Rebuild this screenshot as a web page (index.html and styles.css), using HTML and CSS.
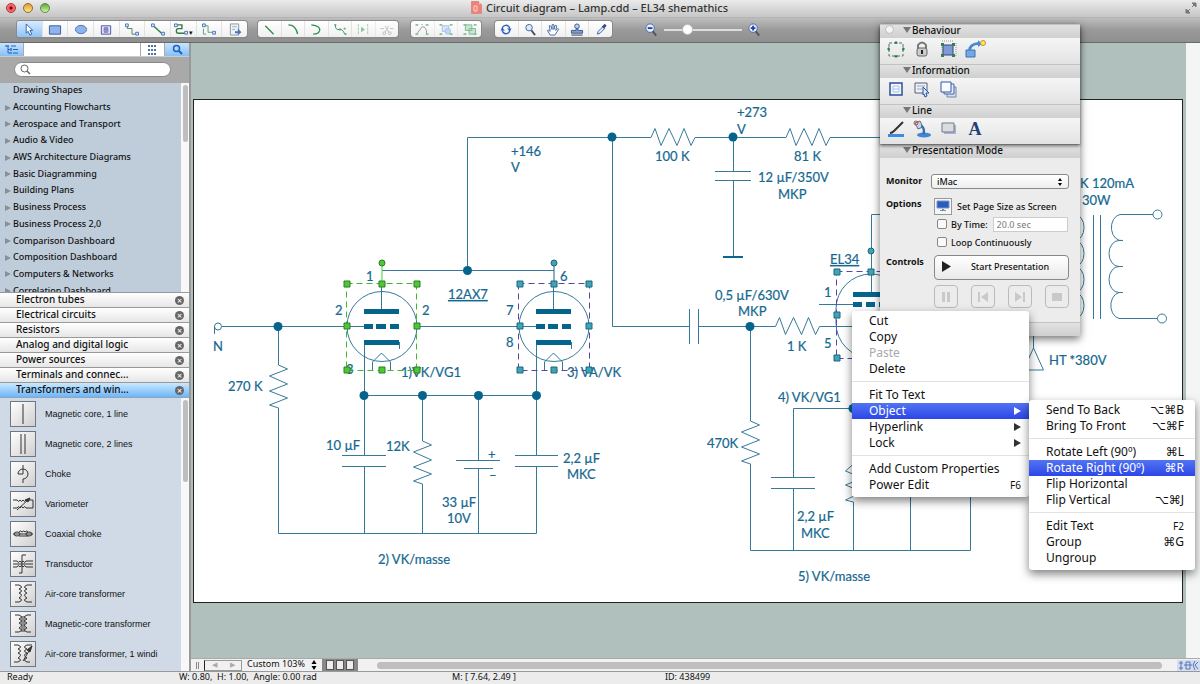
FILE: index.html
```html
<!DOCTYPE html>
<html lang="en">
<head>
    <meta charset="UTF-8">
    <meta name="viewport" content="width=device-width, initial-scale=1.0">
    <title>Circuit diagram – Lamp.cdd – EL34 shemathics</title>
    <link rel="stylesheet" href="styles.css">
</head>
<body>
    <header class="titlebar">
        <div class="lights">
            <button class="light red" aria-label="Close"></button>
            <button class="light yellow" aria-label="Minimize"></button>
            <button class="light green" aria-label="Zoom"></button>
        </div>
        <h1 class="title">
            <svg width="11" height="13" viewBox="0 0 11 13"><path d="M.5.5h7l3 3v9H.5z" fill="#ee8278" stroke="#d98b84"/><path d="M7.500.5v3h3" fill="#fbd5d0" stroke="#d98b84"/><path d="M3 5h3v5H3z" fill="none" stroke="#fbd5d0"/></svg>
            Circuit diagram – Lamp.cdd – EL34 shemathics
        </h1>
        <svg class="fullscreen" width="12" height="12" viewBox="0 0 12 12"><path d="M7 1h4v4zM1 7v4h4zM7 5l3-3M5 7l-3 3" fill="#777" stroke="#777"/></svg>
    </header>

    <div class="toolbar">
        <div class="group draw-tools">
            <button class="on" aria-label="Select"><svg viewBox="0 0 16 14"><path d="M5 1l7 7H9l2 4-2 1-2-4-2 2z" fill="#fff" stroke="#2c5fa8"/></svg></button>
            <button aria-label="Rectangle"><svg viewBox="0 0 16 14"><path d="M2 3h12v9H2z" fill="#8db4ec" stroke="#3a5a9c"/></svg></button>
            <button aria-label="Ellipse"><svg viewBox="0 0 16 14"><ellipse cx="8" cy="7" rx="6" ry="4.500" fill="#8db4ec" stroke="#4a74bd"/></svg></button>
            <button aria-label="Text"><svg viewBox="0 0 16 14"><path d="M3 3h10v9H3z" fill="#e3e4fb" stroke="#4c4f9c"/><path d="M6 5h4v5H6zM6 7h4" fill="#9697dd" stroke="#7879c4"/></svg></button>
            <button aria-label="Connector"><svg viewBox="0 0 16 14"><path d="M3 3v3h5v6h5" fill="none" stroke="#3a8a50"/><path d="M1 1h3v3H1zM12 10h3v3h-3z" fill="#dce9ff" stroke="#4772bd"/></svg></button>
            <button aria-label="Direct connector"><svg viewBox="0 0 16 14"><path d="M3 3l10 9" stroke="#2f7d46" stroke-width="1.500"/><path d="M1 1h3v3H1zM12 10h3v3h-3z" fill="#dce9ff" stroke="#4772bd"/></svg></button>
            <button aria-label="Smart connector"><svg viewBox="0 0 16 14"><path d="M3 2h6v4H5q-2 0-2 2.500T5 11h8" fill="none" stroke="#2f7d46" stroke-width="1.500"/><path d="M1 1h3v3H1zM12 9h3v3h-3z" fill="#dce9ff" stroke="#4772bd"/></svg><span class="drop">▾</span></button>
            <button aria-label="Chain"><svg viewBox="0 0 16 14"><path d="M3 3h4v7h6M2 6v6h3" fill="none" stroke="#55a172"/><path d="M1 1h3v3H1zM12 9h3v3h-3z" fill="#dce9ff" stroke="#4772bd"/></svg></button>
            <button aria-label="Insert"><svg viewBox="0 0 16 14"><path d="M3 1h9v12H3z" fill="#eef1f5" stroke="#8a94a0"/><path d="M5 4h5M5 7h3" stroke="#93b7a5"/><path d="M8 9h3V6l4 4-4 3v-2H8z" fill="#4b75b8"/></svg></button>
        </div>
        <div class="group line-tools">
            <button aria-label="Line"><svg viewBox="0 0 16 14"><path d="M4 3l9 9" stroke="#2f9050" stroke-width="1.500"/></svg></button>
            <button aria-label="Arc"><svg viewBox="0 0 16 14"><path d="M3 2q8 0 10 10" fill="none" stroke="#2f9050" stroke-width="1.500"/></svg></button>
            <button aria-label="Curve"><svg viewBox="0 0 16 14"><path d="M3 2q10 1 9 6-1 4-7 4" fill="none" stroke="#2f9050" stroke-width="1.500"/></svg></button>
            <button aria-label="Spline"><svg viewBox="0 0 16 14"><path d="M3 2q0 6 4 5t6 5" fill="none" stroke="#2f9050"/><path d="M2 1h2v2H2zM7 6h2v2H7zM13 11h2v2h-2zM12 5h2v2h-2z" fill="#64a77b"/></svg></button>
            <button class="dim" aria-label="Mirror"><svg viewBox="0 0 16 14"><path d="M3 1v12M13 1v12" stroke="#66b27f" stroke-dasharray="3 1"/><path d="M6 4v6l4-3z" fill="#3f9a5d"/></svg></button>
            <button class="dim" aria-label="Trim"><svg viewBox="0 0 16 14"><path d="M1 6h4M11 6h4M6 3l4 7M10 3l-4 7" stroke="#999"/><circle cx="5" cy="11" r="1.500" fill="none" stroke="#999"/><circle cx="11" cy="11" r="1.500" fill="none" stroke="#999"/></svg></button>
        </div>
        <div class="group edit-tools">
            <button class="dim" aria-label="Edit points"><svg viewBox="0 0 16 14"><path d="M3 11l5-7q5 0 5 7" fill="none" stroke="#555"/><path d="M1 1h3v2H1zM12 1h3v2h-3zM1 11h3v2H1zM12 11h3v2h-3zM7 1h2v1H7z" fill="#31a45a"/></svg></button>
            <button class="dim" aria-label="Union"><svg viewBox="0 0 16 14"><path d="M4 3h7v6H4z" fill="#c2dcff" stroke="#6c9bd6"/><circle cx="10" cy="9" r="3" fill="#9ec4fa" stroke="#6c9bd6"/><path d="M1 1h3v2H1zM12 1h3v2h-3zM1 11h3v2H1zM12 11h3v2h-3z" fill="#31a45a"/></svg></button>
            <button class="dim" aria-label="Group"><svg viewBox="0 0 16 14"><path d="M3 2h7v6H3zM7 6h7v6H7z" fill="#a8ddbb" stroke="#31904f"/><path d="M1 1h3v2H1zM12 1h3v2h-3zM1 11h3v2H1zM12 11h3v2h-3z" fill="#31a45a"/></svg></button>
        </div>
        <div class="group view-tools">
            <button aria-label="Refresh"><svg viewBox="0 0 16 14"><path d="M4 7a4 4 0 0 1 8-1M12 7a4 4 0 0 1-8 1" fill="none" stroke="#2c62bb" stroke-width="1.500"/><path d="M9 6h5l-2 3zM2 8h5L4 5z" fill="#2c62bb"/></svg></button>
            <button aria-label="Magnifier"><svg viewBox="0 0 16 14"><circle cx="7" cy="5" r="3.500" fill="#dce9ff" stroke="#44659c"/><path d="M9.500 8l4 5" stroke="#45516b" stroke-width="2"/></svg></button>
            <button aria-label="Pan"><svg viewBox="0 0 16 14"><path d="M5 13L2 8q1-1 3 1L4 3q1-1 2 1l1 3V2q1-1 2 0v5l1-4q1-1 2 0l-1 5 2-2q1 0 1 1l-4 6z" fill="#fff" stroke="#3b63ab"/></svg></button>
            <button aria-label="Stamp"><svg viewBox="0 0 16 14"><circle cx="8" cy="3.500" r="2.500" fill="#bcd1f6" stroke="#39558b"/><path d="M7 6h2v2h5v3H2V8h5z" fill="#7f9fd8" stroke="#39558b"/><path d="M2 13h12" stroke="#333"/></svg></button>
            <button aria-label="Eyedropper"><svg viewBox="0 0 16 14"><path d="M4 12l1-3 5-5 2 2-5 5z" fill="#dce9ff" stroke="#3f6299"/><path d="M10 5l3-3" stroke="#2b4b87" stroke-width="3"/></svg></button>
        </div>
        <div class="zoom">
            <button aria-label="Zoom out"><svg viewBox="0 0 16 16"><path d="M9 9l4 5" stroke="#555" stroke-width="2"/><circle cx="6.500" cy="6" r="4.500" fill="#e9f1ff" stroke="#4967af"/><path d="M4 6h5" stroke="#2342a0" stroke-width="2"/></svg></button>
            <input type="range" min="0" max="100" value="27" aria-label="Zoom level">
            <button aria-label="Zoom in"><svg viewBox="0 0 16 16"><path d="M9 9l4 5" stroke="#555" stroke-width="2"/><circle cx="6.500" cy="6" r="4.500" fill="#e9f1ff" stroke="#4967af"/><path d="M4 6h5M6.500 3.500v5" stroke="#2342a0" stroke-width="2"/></svg></button>
        </div>
    </div>

    <main class="workspace">
        <aside class="sidebar">
            <div class="tabs">
                <button class="tab on" aria-label="Tree"><svg width="14" height="11" viewBox="0 0 14 11"><path d="M0 2h3M6 2h5M3 2v7h3M3 5.500h3M8 5.500h5M8 9h5" fill="none" stroke="#2563b5"/><path d="M5 4h2v3H5zM5 8h2v2H5zM1 1h3v2H1z" fill="#4d87cf"/></svg></button>
                <span class="tab-gap"></span>
                <button class="tab grid" aria-label="Grid"><svg width="9" height="10" viewBox="0 0 9 10"><path d="M0 0h2v2H0zM3 0h2v2H3zM6 0h2v2H6zM0 4h2v2H0zM3 4h2v2H3zM6 4h2v2H6zM0 8h2v2H0zM3 8h2v2H3zM6 8h2v2H6z" fill="#4a70a8"/></svg></button>
                <button class="tab on search-tab" aria-label="Search"><svg width="11" height="11" viewBox="0 0 11 11"><circle cx="4.500" cy="4.500" r="3" fill="none" stroke="#1e60b5" stroke-width="1.500"/><path d="M7 7l3 3" stroke="#1e60b5" stroke-width="2"/></svg></button>
            </div>
            <label class="search">
                <svg width="11" height="11" viewBox="0 0 11 11"><circle cx="4.500" cy="4.500" r="3.500" fill="none" stroke="#666"/><path d="M7 7l3 3" stroke="#666" stroke-width="1.500"/></svg>
                <input type="search" aria-label="Search libraries">
            </label>
            <div class="tree">
                <ul>
                    <li class="leaf">Drawing Shapes</li>
                    <li>Accounting Flowcharts</li>
                    <li>Aerospace and Transport</li>
                    <li>Audio &amp; Video</li>
                    <li>AWS Architecture Diagrams</li>
                    <li>Basic Diagramming</li>
                    <li>Building Plans</li>
                    <li>Business Process</li>
                    <li>Business Process 2,0</li>
                    <li>Comparison Dashboard</li>
                    <li>Composition Dashboard</li>
                    <li>Computers &amp; Networks</li>
                    <li>Correlation Dashboard</li>
                </ul>
                <div class="vtrack"><div class="vthumb"></div></div>
            </div>
            <ul class="libs">
                <li>Electron tubes <button aria-label="Close library">×</button></li>
                <li>Electrical circuits <button aria-label="Close library">×</button></li>
                <li>Resistors <button aria-label="Close library">×</button></li>
                <li>Analog and digital logic <button aria-label="Close library">×</button></li>
                <li>Power sources <button aria-label="Close library">×</button></li>
                <li>Terminals and connec... <button aria-label="Close library">×</button></li>
                <li class="active">Transformers and win... <button aria-label="Close library">×</button></li>
            </ul>
            <div class="shapes">
                <ul>
                    <li><svg viewBox="0 0 24 24"><path d="M12 2v20"/></svg>Magnetic core, 1 line</li>
                    <li><svg viewBox="0 0 24 24"><path d="M10 2v20M14 2v20"/></svg>Magnetic core, 2 lines</li>
                    <li><svg viewBox="0 0 24 24"><path d="M12 3v9H7a5 5 0 1 1 5 5v4"/></svg>Choke</li>
                    <li><svg viewBox="0 0 24 24"><path d="M2 8h4q2 3 3 0 2 3 3 0 2 3 3 0h7v8M2 16h4q2-3 3 0 2-3 3 0 2-3 3 0h7M6 18L19 6"/><path d="M19 6l-5 2 3 2z" fill="#333"/></svg>Variometer</li>
                    <li><svg viewBox="0 0 24 24"><path d="M2 12h20M8 10q2-2 3 0 2-2 3 0 2-2 3 0M8 14h9"/><ellipse cx="6" cy="12" rx="3" ry="2"/><ellipse cx="18" cy="12" rx="3" ry="2"/></svg>Coaxial choke</li>
                    <li><svg viewBox="0 0 24 24"><path d="M2 9h4q1 3 3 0 1 3 3 0 2 3 3 0h7M2 15h4q1-3 3 0 1-3 3 0 2-3 3 0h7M15 3h-4v18H8M2 12h20"/></svg>Transductor</li>
                    <li><svg viewBox="0 0 24 24"><path d="M4 3h4q5 2 0 4 5 2 0 4 5 2 0 5 5 2 0 4H4M21 3h-5q-5 2 0 4-5 2 0 4-5 2 0 5-5 2 0 4h5"/></svg>Air-core transformer</li>
                    <li><svg viewBox="0 0 24 24"><path d="M4 3h4q5 2 0 4 5 2 0 4 5 2 0 5 5 2 0 4H4M20 3h-4q-5 2 0 4-5 2 0 4-5 2 0 5-5 2 0 4h4M11 4v16M13 4v16"/></svg>Magnetic-core transformer</li>
                    <li><svg viewBox="0 0 24 24"><path d="M3 3h4q5 2 0 4 5 2 0 4 5 2 0 5 5 2 0 4H3M21 3h-5q-5 2 0 4-5 2 0 4-5 2 0 5-5 2 0 4h3M12 19l9-15"/><path d="M21 4l-5 4 3 2z" fill="#333"/></svg>Air-core transformer, 1 windi</li>
                </ul>
                <div class="vtrack"><div class="vthumb long"></div></div>
            </div>
        </aside>

        <section class="editor">
            <div class="stage">
                <svg class="diagram" width="995" height="615" viewBox="191 43 995 615">
                    <rect class="paper" x="193.500" y="99.500" width="989" height="503"/>

                    <!-- wires -->
                    <g class="wire">
                        <circle cx="218" cy="326.500" r="3.500"/>
                        <path d="M214.500 326v8M222 326.500h142M417 326.500h119"/>
                        <path d="M278.500 326v39l9 4-18 7 18 8-18 7 18 7-18 7 9 3v125.500h258v-67M536.500 455.500V345M364.500 345v110.500"/>
                        <path d="M382 270.500h172M467.500 270V137.500H651l4-9 6 17 8-17 8 17 7-17 7 17 4-8h91l4-9 6 17 8-17 8 17 7-17 7 17 4-8h60"/>
                        <path d="M733.500 137v34.500M715 171.500h36M715 180.500h36M733.500 180.500V257"/>
                        <path d="M612.500 137v189.500h77M689.500 309v35M698.500 309v35M698.500 326.500h77l4-9 6 17 8-17 8 17 7-17 7 17 4-8h40"/>
                        <path d="M342 455.500h44M342 466.500h44M364.500 466.500v67M364 395.500h173"/>
                        <path d="M422.500 395v46l9 4-18 7 18 8-18 7 18 7-18 7 9 3v49.500"/>
                        <path d="M478.500 395v65.500M456 460.500h44M464 468.500h29M478.500 468.500v65"/>
                        <path d="M515 455.500h43M515 466.500h43"/>
                        <path d="M750.500 326v95l9 4-18 7 18 8-18 7 18 7-18 7 9 3v86.500h220V490"/>
                        <path d="M852 408.500h-58.500v69M771 477.500h44M771 488.500h44M793.500 488.500v62M910.500 490v60"/>
                        <path d="M853.500 408v56l-8 7 17 7-17 7 17 7-17 8 8 2v48"/>
                        <path d="M871.500 292v-77.500h20M819 304.500h34"/>
                        <path d="M906 309a35 35 0 0 0-70 0v14a35 35 0 0 0 70 0z"/>
                        <path d="M1093.500 215v104M1100.500 215v104M1153 214.500h-33a10 13 0 0 0 3 26h-4a10 13 0 0 0 0 26h4-4a10 13 0 0 0 0 26h4-4a10 13 0 0 0 4 26h34"/>
                        <path d="M1075 214.500a9 13 0 0 1 0 26 9 13 0 0 1 0 26 9 13 0 0 1 0 26 9 13 0 0 1 0 26"/>
                        <circle cx="1157.500" cy="214.500" r="4.500"/>
                        <circle cx="1162" cy="318.500" r="4.500"/>
                        <path d="M1033.500 330v18l-10 22h20l-10-22"/>
                    </g>
                    <rect x="723" y="256" width="20" height="2" fill="#0b678f"/>

                    <!-- tubes -->
                    <g id="tube">
                        <g class="wire">
                            <circle cx="382" cy="326.500" r="35"/>
                            <path d="M381.500 283v28M346 326.500h20M399.500 342v7M372.500 370v-8l9-9 9 9v8"/>
                        </g>
                        <path class="solid" d="M364 309h35v5h-35zM364 324h9v5h-9zM376 324h10v5h-10zM390 324h9v5h-9zM364 340h35v5h-35z"/>
                    </g>
                    <use href="#tube" x="172"/>
                    <path class="solid" d="M853 292h30v5h-30zM853 302h9v5h-9zM866 302h9v5h-9zM879 302h9v5h-9z"/>

                    <!-- junctions -->
                    <g class="solid">
                        <circle cx="278" cy="326.500" r="4.500"/><circle cx="467.500" cy="270.500" r="4.500"/>
                        <circle cx="612" cy="137" r="4.500"/><circle cx="733" cy="137" r="4.500"/>
                        <circle cx="364" cy="395.500" r="4.500"/><circle cx="422.500" cy="395.500" r="4.500"/>
                        <circle cx="478.500" cy="395.500" r="4.500"/><circle cx="536.500" cy="395.500" r="4.500"/>
                        <circle cx="750" cy="326.500" r="4.500"/><circle cx="853" cy="408.500" r="4.500"/>
                    </g>

                    <!-- labels -->
                    <g class="label">
                        <text x="511" y="156">+146</text><text x="511" y="172">V</text>
                        <text x="737" y="117">+273</text><text x="737" y="134">V</text>
                        <text x="655" y="161">100 K</text><text x="794" y="161">81 K</text>
                        <text x="758" y="182">12 µF/350V</text><text x="778" y="199">MKP</text>
                        <text x="715" y="300">0,5 µF/630V</text><text x="738" y="316">MKP</text>
                        <text x="448" y="299" class="ref">12AX7</text><text x="830" y="264" class="ref">EL34</text>
                        <text x="213" y="351">N</text><text x="228" y="391">270 K</text>
                        <text x="366" y="281">1</text><text x="335" y="315">2</text><text x="422" y="315">2</text><text x="346" y="374">3</text>
                        <text x="560" y="281">6</text><text x="506" y="315">7</text><text x="506" y="347">8</text>
                        <text x="401" y="377">1)VK/VG1</text><text x="567" y="377">3) VA/VK</text>
                        <text x="326" y="450">10 µF</text><text x="386" y="451">12K</text>
                        <text x="488" y="459">+</text><text x="489" y="480">–</text>
                        <text x="442" y="507">33 µF</text><text x="447" y="523">10V</text>
                        <text x="563" y="463">2,2 µF</text><text x="567" y="479">MKC</text>
                        <text x="378" y="564">2) VK/masse</text><text x="798" y="581">5) VK/masse</text>
                        <text x="787" y="351">1 K</text><text x="824" y="297">1</text><text x="824" y="348">5</text>
                        <text x="778" y="402">4) VK/VG1</text><text x="707" y="448">470K</text>
                        <text x="797" y="521">2,2 µF</text><text x="801" y="538">MKC</text>
                        <text x="1080" y="188">K 120mA</text><text x="1082" y="205">30W</text>
                        <text x="1049" y="365">HT *380V</text>
                    </g>

                    <!-- selection frames -->
                    <g class="sel first">
                        <path class="frame" d="M346.500 283.500h70v87h-70z"/><path class="stem" d="M382 263v20"/>
                        <circle cx="382" cy="263" r="3"/>
                        <path d="M344 281h6v6h-6zM379 281h6v6h-6zM414 281h6v6h-6zM344 323h6v6h-6zM414 323h6v6h-6zM344 367h6v6h-6zM379 367h6v6h-6zM414 367h6v6h-6z"/>
                    </g>
                    <g class="sel">
                        <path class="frame" d="M518.500 283.500h71v87h-71z"/><path class="stem" d="M554 263v20"/>
                        <circle cx="554" cy="263" r="3"/>
                        <path d="M517 281h6v6h-6zM551 281h6v6h-6zM586 281h6v6h-6zM517 323h6v6h-6zM586 323h6v6h-6zM517 367h6v6h-6zM551 367h6v6h-6zM586 367h6v6h-6z"/>
                    </g>
                    <g class="sel">
                        <path class="frame" d="M836.500 271.500h70v87h-70z"/>
                        <circle cx="871" cy="251" r="3"/>
                        <path d="M834 269h6v6h-6zM868 269h6v6h-6zM834 312h6v6h-6zM834 355h6v6h-6z"/>
                    </g>
                </svg>
                <div class="stage-scroll"></div>
            </div>
            <div class="pagebar">
                <span class="grip"></span>
                <div class="nav"><button aria-label="Previous page">◀</button><button aria-label="Next page">▶</button></div>
                <select aria-label="Zoom"><option>Custom 103%</option></select>
                <svg class="updown" width="6" height="10" viewBox="0 0 6 10"><path d="M3 0l2.500 4h-5zM3 10L.5 6h5z"/></svg>
                <div class="layouts"><i></i><i></i><i></i></div>
                <div class="htrack"><div class="hthumb"></div></div>
                <svg class="corner" width="23" height="11" viewBox="0 0 23 11"><path d="M0 0h23v11H0z" fill="#d3ddf0"/><path d="M2 3h4M2 8h4M4 1v9M9 2h4v7H9zM7 5h8M18 1l-2 4 2 5M21 2l-3 3 3 4" fill="none" stroke="#5775b8"/></svg>
            </div>
        </section>
    </main>

    <footer class="status">
        <span class="s-ready">Ready</span>
        <span class="s-size">W: 0.80,&nbsp; H: 1.00,&nbsp; Angle: 0.00 rad</span>
        <span class="s-mouse">M: [ 7.64, 2.49 ]</span>
        <span>ID: 438499</span>
    </footer>

    <div class="palette">
        <div class="palette-tools">
            <span class="dot"></span>
            <h2>Behaviour</h2>
            <div class="icons">
                <button aria-label="Resize"><svg viewBox="0 0 18 18"><path d="M2 3h14v13H2z" fill="none" stroke="#46785b" stroke-dasharray="3 2"/><path d="M7 3l2-2 2 2-2 1zM7 16l2 2 2-2-2-1zM2 7L0 9l2 2 1-2zM16 7l2 2-2 2-1-2z" fill="#23804a"/></svg></button>
                <button aria-label="Lock"><svg viewBox="0 0 18 18"><path d="M5 9V5q4-5 8 0v4" fill="none" stroke="#777" stroke-width="2"/><rect x="4" y="8" width="10" height="8" rx="2" fill="#ccc" stroke="#666"/><path d="M9 10v4" stroke="#222" stroke-width="2"/></svg></button>
                <button aria-label="Connection"><svg viewBox="0 0 18 18"><path d="M3 1h12M3 3v13M17 3v13" stroke="#999" stroke-dasharray="1 1"/><path d="M4 5h10v10H4z" fill="#7f9bd6" stroke="#334779"/><path d="M2 3h3v3H2zM13 3h3v3h-3zM2 14h3v3H2zM13 14h3v3h-3z" fill="#2f8052"/></svg></button>
                <button aria-label="Hyperlink"><svg viewBox="0 0 22 18"><path d="M1 10h9v7H1z" fill="#78a6e0" stroke="#3971b8"/><path d="M3 10Q4 3 13 2v-2l4 4-4 3V5Q7 5 6 10z" fill="#4789d5"/><circle cx="18" cy="3" r="2.500" fill="#ffe46c" stroke="#c09a1a"/></svg></button>
            </div>
            <h2>Information</h2>
            <div class="icons">
                <button aria-label="Note"><svg viewBox="0 0 18 18"><path d="M3 3h12v12H3z" fill="#f2f7ff" stroke="#2d4f97" stroke-width="1.500"/><path d="M6 6h6v6H6zM6 9h6" fill="none" stroke="#b3c4e6"/></svg></button>
                <button aria-label="Custom properties"><svg viewBox="0 0 18 18"><path d="M2 3h12v10H2z" fill="#eef1f7" stroke="#555f72"/><path d="M4 6h8M4 9h5" stroke="#9aa8c0"/><path d="M10 7l6 6h-3l1 3-2 1-1-3-1 1z" fill="#d8e7ff" stroke="#2851a0"/></svg></button>
                <button aria-label="Layers"><svg viewBox="0 0 18 18"><path d="M8 7h9v10H8z" fill="#d3def5" stroke="#7584a8"/><path d="M5 4h10v10H5z" fill="#e3ebfb" stroke="#4a65a3"/><path d="M2 2h10v10H2z" fill="#f7faff" stroke="#3359a8"/></svg></button>
            </div>
            <h2>Line</h2>
            <div class="icons">
                <button aria-label="Line colour"><svg viewBox="0 0 18 18"><path d="M1 15.500h16" stroke="#3c8be0" stroke-width="3"/><path d="M7 11l9-9M7 11q-2 2-4 2" fill="none" stroke="#333" stroke-width="2"/></svg></button>
                <button aria-label="Fill"><svg viewBox="0 0 18 18"><ellipse cx="11" cy="15" rx="7" ry="2.500" fill="#3e86d2"/><path d="M2 3l5-2 3 6-5 2z" fill="#cbd3e2" stroke="#5f6b85"/><path d="M8 5q5 1 4 9h-3q2-4-1-7z" fill="#346eb7"/><circle cx="3" cy="3" r="2" fill="none" stroke="#a35353"/></svg></button>
                <button aria-label="Shadow"><svg viewBox="0 0 18 18"><path d="M5 5h12v9H5z" fill="#a8b4d0"/><path d="M3 3h12v9H3z" fill="#d9dce0" stroke="#767b88"/></svg></button>
                <button class="font-btn" aria-label="Font">A</button>
            </div>
        </div>
        <h2 class="wide">Presentation Mode</h2>
        <form class="present">
            <label class="name" for="monitor">Monitor</label>
            <div class="field"><div class="pick"><select id="monitor"><option>iMac</option></select><svg class="updown" width="6" height="8" viewBox="0 0 6 8"><path d="M3 0l2 3H1zM3 8L1 5h4z"/></svg></div></div>
            <span class="name options-name">Options</span>
            <div class="field options">
                <div class="opt"><button type="button" class="screen" aria-label="Set Page Size as Screen"><svg width="14" height="12" viewBox="0 0 14 12"><path d="M1 1h12v7H1z" fill="#2c5dbb" stroke="#7396d4"/><path d="M6 9h2v1h2v1H4v-1h2z" fill="#7e8ba8"/></svg></button>Set Page Size as Screen</div>
                <div class="opt"><label><input type="checkbox">By Time:</label><input type="text" value="20.0 sec" aria-label="Time"></div>
                <div class="opt"><label><input type="checkbox">Loop Continuously</label></div>
            </div>
            <span class="name">Controls</span>
            <div class="field">
                <button type="button" class="start"><svg width="11" height="13" viewBox="0 0 11 13"><path d="M1 1l9 5.500L1 12z" fill="#222"/></svg><span>Start Presentation</span></button>
                <div class="players">
                    <button type="button" aria-label="Pause"><svg viewBox="0 0 14 14"><path d="M3 2h3v10H3zM8 2h3v10H8z"/></svg></button>
                    <button type="button" aria-label="Previous"><svg viewBox="0 0 14 14"><path d="M2 2h2v10H2zM12 2v10L5 7z"/></svg></button>
                    <button type="button" aria-label="Next"><svg viewBox="0 0 14 14"><path d="M10 2h2v10h-2zM2 2v10l7-5z"/></svg></button>
                    <button type="button" aria-label="Stop"><svg viewBox="0 0 14 14"><path d="M2 3h10v8H2z"/></svg></button>
                </div>
            </div>
        </form>
        <h2 class="hyper">&nbsp;</h2>
    </div>

    <ul class="menu context">
        <li>Cut</li>
        <li>Copy</li>
        <li class="off">Paste</li>
        <li>Delete</li>
        <li class="sep"></li>
        <li>Fit To Text</li>
        <li class="hot">Object <span class="arrow"></span></li>
        <li>Hyperlink <span class="arrow"></span></li>
        <li>Lock <span class="arrow"></span></li>
        <li class="sep"></li>
        <li>Add Custom Properties</li>
        <li>Power Edit <kbd class="fn">F6</kbd></li>
    </ul>

    <ul class="menu submenu">
        <li>Send To Back <kbd>⌥⌘B</kbd></li>
        <li>Bring To Front <kbd>⌥⌘F</kbd></li>
        <li class="sep"></li>
        <li>Rotate Left (90º) <kbd>⌘L</kbd></li>
        <li class="hot">Rotate Right (90º) <kbd>⌘R</kbd></li>
        <li>Flip Horizontal</li>
        <li>Flip Vertical <kbd>⌥⌘J</kbd></li>
        <li class="sep"></li>
        <li>Edit Text <kbd class="fn">F2</kbd></li>
        <li>Group <kbd>⌘G</kbd></li>
        <li>Ungroup</li>
    </ul>
</body>
</html>
```

FILE: styles.css
```css
* {
    box-sizing: border-box;
}
body {
    margin: 0;
    height: 100vh;
    display: flex;
    flex-direction: column;
    overflow: hidden;
    position: relative;
    font-family: "Noto Sans", "Open Sans", sans-serif;
    font-size: 9px;
    color: #111;
    background: #ececec;
}
ul {
    list-style: none;
    margin: 0;
    padding: 0;
}
button, input, select {
    font: inherit;
    color: inherit;
    margin: 0;
    padding: 0;
    border: 0;
    background: none;
}
svg {
    display: block;
    flex: none;
}

/* title bar */
.titlebar {
    height: 18px;
    flex: none;
    display: flex;
    align-items: center;
    padding: 0 3px 2px 6px;
    background: linear-gradient(#ebebeb, #c6c6c6);
    border-bottom: 1px solid #b5b5b5;
}
.lights {
    display: flex;
    gap: 7px;
    width: 60px;
}
.light {
    width: 10px;
    height: 10px;
    border-radius: 50%;
    border: 1px solid #8c6a3a;
}
.red { background: radial-gradient(#6b0a0a 15%, #f0525a 35%, #f99); border-color: #a33; }
.yellow { background: linear-gradient(#e59a25, #ffe88a); }
.green { background: linear-gradient(#5aa83a, #d3f7a5); border-color: #5a8a4a; }
.title {
    flex: 1;
    display: flex;
    align-items: center;
    justify-content: center;
    gap: 4px;
    margin: 0 52px 0 0;
    font-size: 11px;
    line-height: 14px;
    font-weight: 500;
    color: #333;
}

/* toolbar */
.toolbar {
    height: 25px;
    flex: none;
    display: flex;
    align-items: center;
    padding: 0 0 2px 17px;
    background: linear-gradient(#bdbdbd, #9a9a9a 50%, #8f8f8f);
    border-bottom: 1px solid #6a6a6a;
}
.group {
    display: flex;
    height: 16px;
    border-radius: 3px;
    background: linear-gradient(#fff, #f0f0f0);
    box-shadow: 0 0 0 1px #8a8a8a, 0 1px 1px #666;
    overflow: hidden;
}
.group button {
    flex: 1;
    display: flex;
    align-items: center;
    justify-content: center;
    border-right: 1px solid #e2e2e2;
}
.group button:last-child { border-right: 0; }
.group svg { width: 16px; height: 13px; }
.group .on { background: linear-gradient(#d8ebff, #8fc4f8); }
.dim { opacity: 0.6; }
.drop { font-size: 7px; align-self: flex-end; }
.draw-tools { width: 230px; }
.line-tools { width: 140px; margin-left: 11px; }
.edit-tools { width: 70px; margin-left: 13px; }
.view-tools { width: 117px; margin-left: 14px; }
.zoom {
    display: flex;
    align-items: center;
    gap: 5px;
    margin-left: 32px;
    padding-top: 2px;
}
.zoom svg { width: 15px; height: 16px; }
.zoom input {
    appearance: none;
    width: 78px;
    height: 12px;
}
.zoom input::-webkit-slider-runnable-track {
    height: 2px;
    background: #ddd;
}
.zoom input::-webkit-slider-thumb {
    appearance: none;
    width: 11px;
    height: 11px;
    margin-top: -5px;
    border-radius: 50%;
    background: #fff;
    border: 1px solid #bbb;
}

/* sidebar */
.workspace {
    flex: 1;
    display: flex;
    min-height: 0;
}
.sidebar {
    width: 191px;
    flex: none;
    display: flex;
    flex-direction: column;
    background: #a9a9a9;
    border-right: 2px solid #999;
}
.tabs {
    height: 14px;
    flex: none;
    display: flex;
    background: #fff;
    border-bottom: 1px solid #ccc;
}
.tab {
    width: 24px;
    display: flex;
    align-items: center;
    justify-content: center;
    border-right: 1px solid #aaa;
}
.tab.on { background: linear-gradient(#c9e3ff, #86c0f8); }
.tab-gap { flex: 1; border-right: 1px solid #aaa; }
.search-tab { border-right: 0; }
.search {
    flex: none;
    height: 15px;
    width: 157px;
    margin: 5px 0 6px 14px;
    padding-left: 5px;
    display: flex;
    align-items: center;
    border-radius: 8px;
    background: #fff;
    border: 1px solid #888;
}
.search input { flex: 1; min-width: 0; outline: 0; appearance: none; }
.tree {
    flex: none;
    height: 209px;
    display: flex;
    overflow: hidden;
    background: #bfcddb;
}
.tree ul {
    flex: 1;
    height: 217px;
    display: grid;
    grid-auto-rows: 1fr;
}
.tree li {
    display: flex;
    align-items: center;
    padding-bottom: 3px;
    font-size: 9px;
    font-weight: 500;
    white-space: nowrap;
}
.tree li::before {
    content: "";
    width: 0;
    margin: 2px 2px 0 5px;
    border: 3px solid transparent;
    border-left: 6px solid #85909b;
    border-right: 0;
}
.tree .leaf::before { visibility: hidden; }
.vtrack {
    width: 8px;
    background: #f8f8f8;
    padding: 2px 1px 0 2px;
}
.vthumb {
    height: 57px;
    border-radius: 3px;
    background: #bebebe;
}
.vthumb.long { height: 82px; }
.libs { flex: none; }
.libs li {
    height: 15px;
    display: flex;
    align-items: center;
    justify-content: space-between;
    padding: 0 5px 2px 16px;
    font-size: 10px;
    line-height: 12px;
    font-weight: 500;
    background: linear-gradient(#fff, #e6e6e6);
    border-top: 1px solid #999;
}
.libs .active { background: linear-gradient(#c9e8ff, #6db6f7); }
.libs button {
    width: 9px;
    height: 9px;
    margin-top: 3px;
    border-radius: 50%;
    background: #666;
    color: #fff;
    font-size: 9px;
    line-height: 8px;
}
.shapes {
    flex: 1;
    min-height: 0;
    overflow: hidden;
    display: flex;
    background: #d0dae6;
    border-top: 1px solid #8ea5bb;
}
.shapes ul { flex: 1; padding-top: 1px; }
.shapes li {
    height: 30px;
    display: flex;
    align-items: center;
    gap: 9px;
    padding-left: 10px;
    font-family: "Liberation Sans", Arial, sans-serif;
    font-size: 9px;
}
.shapes svg {
    width: 26px;
    height: 26px;
    background: linear-gradient(135deg, #fff, #cfcfcf);
    border: 1px solid #6f7780;
    fill: none;
    stroke: #333;
}

/* canvas */
.editor {
    flex: 1;
    min-width: 0;
    display: flex;
    flex-direction: column;
}
.stage {
    flex: 1;
    min-height: 0;
    display: flex;
    overflow: hidden;
    background: #b0c0bd;
}
.stage-scroll {
    flex: 1;
    background: #f3f6f5;
}
.paper { fill: #fff; stroke: #222; }
.wire {
    fill: none;
    stroke: #37799a;
}
.solid { fill: #05648c; }
.label {
    font-family: Lato, sans-serif;
    font-size: 13px;
    fill: #15688f;
    stroke: #15688f;
    stroke-width: 0.2px;
}
.ref { text-decoration: underline; }
.sel {
    fill: #3fa5b5;
    stroke: #1c6680;
}
.first {
    fill: #4cc834;
    stroke: #2c7e26;
}
.sel .frame {
    fill: none;
    stroke: #5b44a8;
    stroke-dasharray: 6 4;
}
.first .frame { stroke: #3fba2a; }
.first .stem { stroke: #3fd02a; }
.sel .stem { stroke-width: 1; }
.pagebar {
    height: 13px;
    flex: none;
    display: flex;
    align-items: center;
    background: #f1f1f1;
    border-top: 1px solid #aaa;
}
.grip {
    width: 3px;
    height: 7px;
    margin: 0 5px;
    border: 1px solid #888;
    border-width: 0 1px;
}
.nav {
    display: flex;
    width: 38px;
    height: 11px;
    border: 1px solid #999;
    border-left-color: #222;
}
.nav button { flex: 1; font-size: 7px; line-height: 8px; color: #aaa; }
.pagebar select {
    appearance: none;
    width: 64px;
    height: 12px;
    margin-left: 5px;
    padding-bottom: 2px;
    font-size: 9px;
    line-height: 10px;
}
.layouts {
    display: flex;
    gap: 2px;
    height: 12px;
    margin-left: 5px;
    padding: 1px 4px;
    background: #888;
}
.layouts i { width: 8px; background: #eee; border: 1px solid #555; }
.htrack {
    flex: 1;
    padding: 0 15px 0 19px;
}
.hthumb { height: 7px; border-radius: 4px; background: #bfbfbf; }

/* status */
.status {
    height: 13px;
    flex: none;
    display: flex;
    align-items: center;
    padding: 0 0 3px 7px;
    line-height: 10px;
    border-top: 1px solid #999;
}
.s-ready { width: 172px; }
.s-size { width: 273px; }
.s-mouse { width: 213px; }

/* inspector palette */
.palette {
    position: absolute;
    left: 880px;
    top: 24px;
    width: 200px;
    background: #ececec;
    box-shadow: 0 3px 8px rgba(0, 0, 0, 0.55);
}
.palette h2 {
    height: 14px;
    margin: 0;
    padding: 0 0 3px 23px;
    display: flex;
    align-items: center;
    font-size: 10px;
    line-height: 12px;
    font-weight: 500;
    background: linear-gradient(#e2e2e2, #cfcfcf);
    border-top: 1px solid #c2c2c2;
}
.palette h2::before {
    content: "";
    margin-right: 1px;
    border: 4px solid transparent;
    border-top: 6px solid #777;
    border-bottom: 0;
}
.palette-tools {
    background: #ececec;
    box-shadow: 0 2px 3px rgba(0, 0, 0, 0.5);
    position: relative;
}
.dot {
    position: absolute;
    left: 5px;
    top: 1px;
    width: 9px;
    height: 9px;
    border-radius: 50%;
    background: #f4f4f4;
    border: 1px solid #bbb;
}
.icons {
    display: flex;
    gap: 8px;
    height: 26px;
    padding: 0 7px 4px;
    background: linear-gradient(#f5f5f5, #e3e3e3);
}
.icons button { display: flex; align-items: center; }
.icons svg { height: 18px; width: auto; }
.icons button:not(.font-btn) { width: 18px; }
.icons .font-btn {
    font: bold 18px "Liberation Serif", serif;
    width: 20px;
    color: #1f4277;
    justify-content: center;
}
.present {
    display: grid;
    grid-template-columns: 45px 138px;
    row-gap: 4px;
    padding: 16px 6px 14px;
    font-weight: 500;
}
.name { font-weight: 700; }
.options-name { padding-top: 4px; }
.pick {
    display: flex;
    align-items: center;
    height: 15px;
    padding: 0 5px;
    border: 1px solid #888;
    border-radius: 3px;
    background: linear-gradient(#fff, #eee);
}
.pick select { flex: 1; appearance: none; font-size: 9px; }
.field.options {
    display: flex;
    flex-direction: column;
    padding: 4px 0 0 3px;
}
.opt {
    display: flex;
    align-items: center;
    height: 18px;
    white-space: nowrap;
}
.opt label { display: flex; align-items: center; }
.screen {
    width: 18px;
    height: 17px;
    margin-right: 5px;
    display: flex;
    align-items: center;
    justify-content: center;
    border: 1px solid #999;
    background: #f6f6f6;
}
.opt input[type="checkbox"] {
    appearance: none;
    width: 10px;
    height: 10px;
    margin: 0 4px 0 3px;
    border: 1px solid #888;
    border-radius: 2px;
    background: #f9f9f9;
}
.opt input[type="text"] {
    width: 75px;
    height: 15px;
    margin-left: 5px;
    padding-left: 3px;
    background: #fff;
    border: 1px solid #ccc;
    color: #888;
}
.start {
    display: flex;
    align-items: center;
    width: 135px;
    height: 25px;
    margin-left: 3px;
    padding: 0 0 2px 6px;
    border: 1px solid #888;
    border-radius: 4px;
    background: linear-gradient(#fff, #e9e9e9);
    font-weight: 500;
}
.start span { flex: 1; text-align: center; }
.players {
    display: flex;
    justify-content: space-between;
    margin: 5px 0 0 3px;
}
.players button {
    width: 24px;
    height: 23px;
    display: flex;
    align-items: center;
    justify-content: center;
    border: 1px solid #bbb;
    border-radius: 4px;
}
.players svg { width: 14px; fill: #c9c9c9; }
.palette .hyper::before { visibility: hidden; }

/* menus */
.menu {
    position: absolute;
    padding: 2px 0 4px;
    background: #fff;
    border-radius: 3px;
    box-shadow: 0 4px 10px rgba(0, 0, 0, 0.5);
    font-size: 12px;
    line-height: 16px;
}
.context {
    left: 852px;
    top: 311px;
    width: 177px;
}
.submenu {
    left: 1029px;
    top: 400px;
    width: 166px;
}
.menu li {
    display: flex;
    align-items: center;
    justify-content: space-between;
    height: 16px;
    padding: 0 8px 0 17px;
    white-space: nowrap;
}
.submenu li { padding: 0 11px 0 17px; }
.menu .sep {
    height: 1px;
    margin: 4px 0 5px;
    background: #e2e2e2;
}
.menu .off { color: #aaa; }
.menu .hot {
    color: #fff;
    background: linear-gradient(#5274f2, #2c46e8);
}
.arrow {
    border: 4px solid transparent;
    border-left: 7px solid #333;
    border-right: 0;
}
.hot .arrow { border-left-color: #fff; }
.menu kbd {
    font-family: "Noto Sans", "DejaVu Sans", sans-serif;
    font-size: 12px;
}
.menu .fn { font-size: 10px; }
```
